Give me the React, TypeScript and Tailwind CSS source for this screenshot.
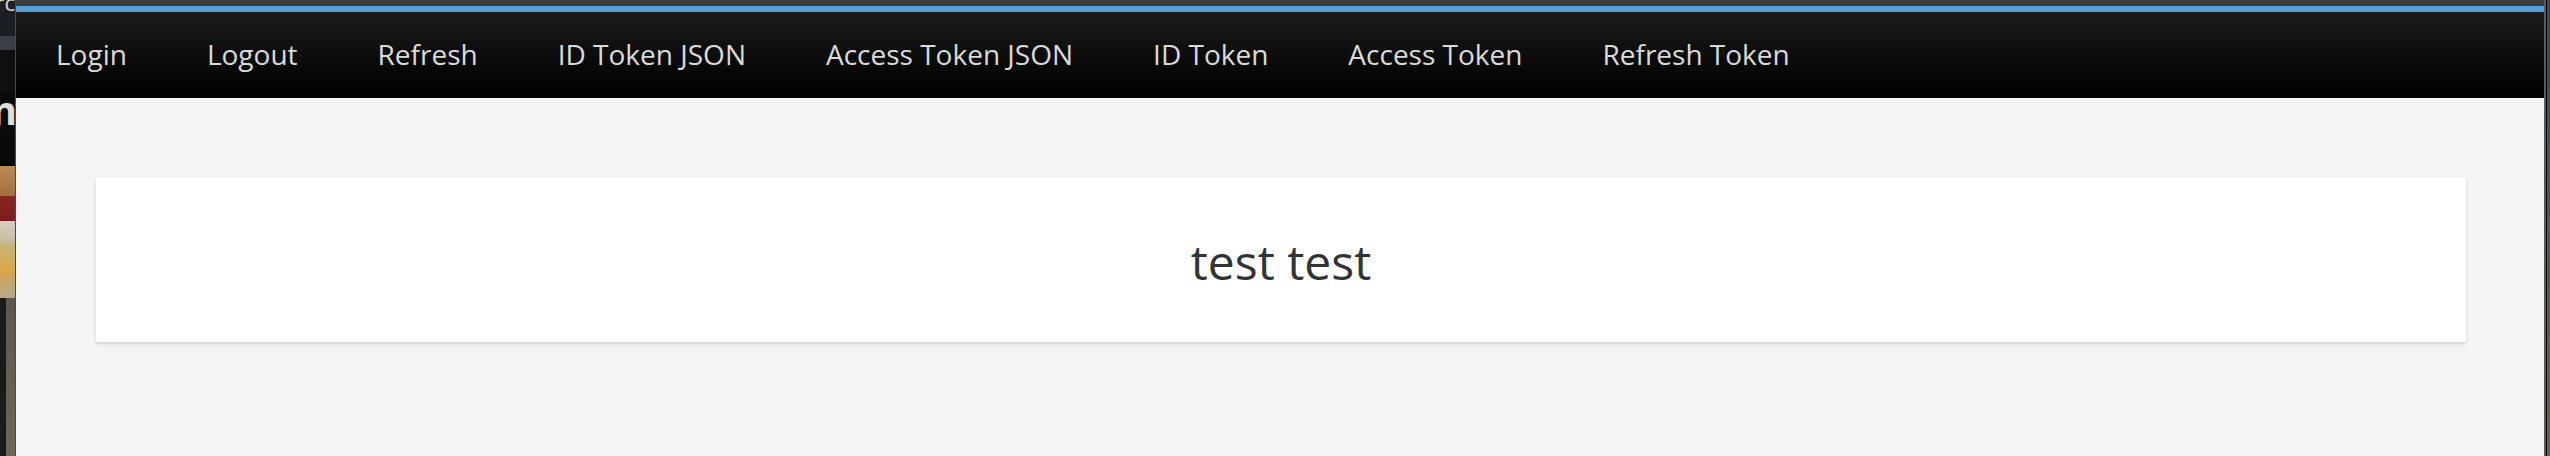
import React from 'react';

const navItems = [
  'Login',
  'Logout',
  'Refresh',
  'ID Token JSON',
  'Access Token JSON',
  'ID Token',
  'Access Token',
  'Refresh Token',
];

// strip of the window behind, visible on the left edge
function BehindWindow() {
  return (
    <div className="flex h-full w-[15px] flex-col overflow-hidden bg-[#16181c]">
      <div className="flex h-[12px] justify-end overflow-hidden bg-[#1d2025]">
        <span className="-mt-[9px] text-[22px] leading-[22px] text-[#d8d8d8] [font-family:'Open_Sans',sans-serif]">
          rc
        </span>
      </div>
      <div className="h-[24px] bg-[#1a1d22]" />
      <div className="h-[14px] bg-[#3b3e44]" />
      <div className="h-[42px] bg-[#0e0f11]" />
      <div className="flex h-[40px] justify-end overflow-hidden bg-[#0b0b0c]">
        <span className="-mr-[2px] text-[40px] font-bold leading-[36px] text-[#dedede] [font-family:'Open_Sans',sans-serif]">
          m
        </span>
      </div>
      <div className="h-[31px] bg-[#0a0a0a]" />
      <div className="h-[3px] bg-black" />
      <div className="h-[30px] bg-gradient-to-b from-[#b98a56] to-[#a4713e]" />
      <div className="h-[25px] bg-gradient-to-b from-[#8a2525] to-[#7a1c1c]" />
      <div className="h-[22px] bg-gradient-to-b from-[#d8d0c4] to-[#c9b8a0]" />
      <div className="h-[30px] bg-gradient-to-b from-[#c7b679] to-[#d9a640]" />
      <div className="h-[25px] bg-gradient-to-b from-[#d2a44e] to-[#b8a88c]" />
      <div className="flex flex-1">
        <div className="w-[6px] bg-[#1a1a1a]" />
        <div className="flex-1 bg-gradient-to-b from-[#5d574d] to-[#6e6656]" />
      </div>
    </div>
  );
}

export default function App() {
  return (
    <div className="flex h-[456px] w-[2550px] overflow-hidden bg-[#3a4550] [font-family:'Open_Sans',sans-serif]">
      <BehindWindow />
      <div className="w-px bg-[#4a4a4a]" />

      <div className="flex flex-1 flex-col bg-[#f4f4f4]">
        <div className="h-[6px] bg-[#3e3e3e]" />
        <div className="h-[6px] bg-[#579fd6]" />
        <nav className="flex h-[86px] items-center bg-gradient-to-b from-[#1c1c1c] to-[#020202] pb-[2px]">
          {navItems.map((item) => (
            <a
              key={item}
              className="px-[40px] text-[28px] leading-none text-[#dadada] [font-family:'Open_Sans',sans-serif]"
            >
              {item}
            </a>
          ))}
        </nav>

        <main className="pl-[80px] pr-[78px] pt-[80px]">
          <div className="flex h-[164px] items-center justify-center bg-white pt-[4px] shadow-[0_2px_3px_rgba(0,0,0,0.15)]">
            <h1 className="text-[48px] leading-none text-[#333333] [font-family:'Open_Sans',sans-serif]">
              test test
            </h1>
          </div>
        </main>
      </div>

      <div className="w-[2px] bg-[#5a5a5a]" />
      <div className="w-[1px] bg-black" />
      <div className="w-[3px] bg-gradient-to-b from-[#3d4954] to-[#6b5f4c]" />
    </div>
  );
}
